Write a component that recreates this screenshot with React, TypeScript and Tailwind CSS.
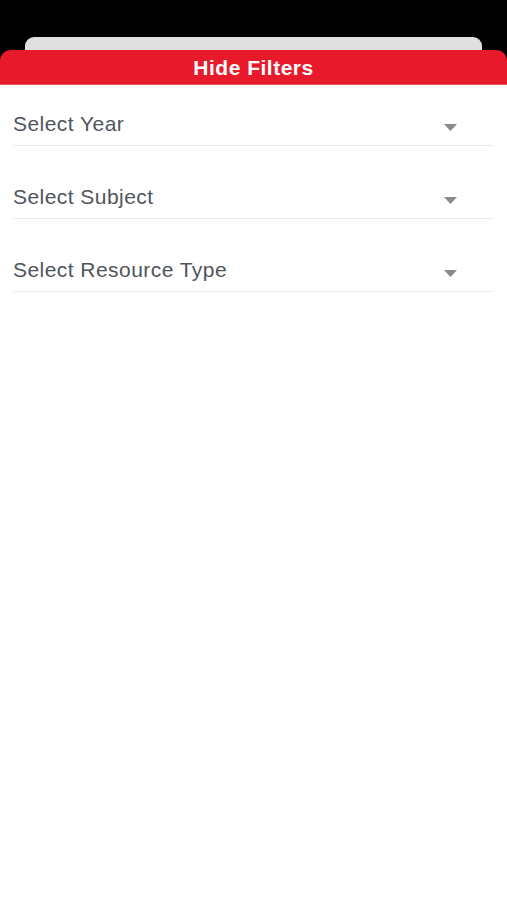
import React from "react";

const filters = ["Select Year", "Select Subject", "Select Resource Type"];

function Caret() {
  return (
    <svg width="13" height="7" viewBox="0 0 13 7" className="mt-[7px] shrink-0">
      <path d="M0 0 L13 0 L6.5 7 Z" fill="#8a8a8a" />
    </svg>
  );
}

export default function App() {
  return (
    <div
      className="flex h-[900px] w-full flex-col bg-black"
      style={{ fontFamily: '"Liberation Sans", Arial, sans-serif' }}
    >
      {/* 顶部留白 */}
      <div className="h-[37px] shrink-0" />

      {/* 背后的卡片 */}
      <div className="mx-[25px] h-[13px] shrink-0 rounded-t-[9px] bg-[#e0e0e0]" />

      {/* 红色标题栏 */}
      <button
        type="button"
        className="flex h-[35px] shrink-0 items-center justify-center rounded-t-[11px] border-b border-[#f0505a] bg-[#e8192a] text-[21px] font-bold leading-none tracking-[0.5px] text-white"
      >
        Hide Filters
      </button>

      {/* 筛选列表 */}
      <div className="flex flex-1 flex-col gap-[12px] bg-white px-[13px]">
        {filters.map((label) => (
          <div
            key={label}
            className="flex items-start justify-between border-b border-[#ececec] pt-[26px] pb-[9px]"
          >
            <span className="text-[21px] leading-[25px] tracking-[0.45px] text-[#50555c]">
              {label}
            </span>
            <div className="mr-[37px] flex h-[25px] items-center">
              <Caret />
            </div>
          </div>
        ))}
      </div>
    </div>
  );
}
